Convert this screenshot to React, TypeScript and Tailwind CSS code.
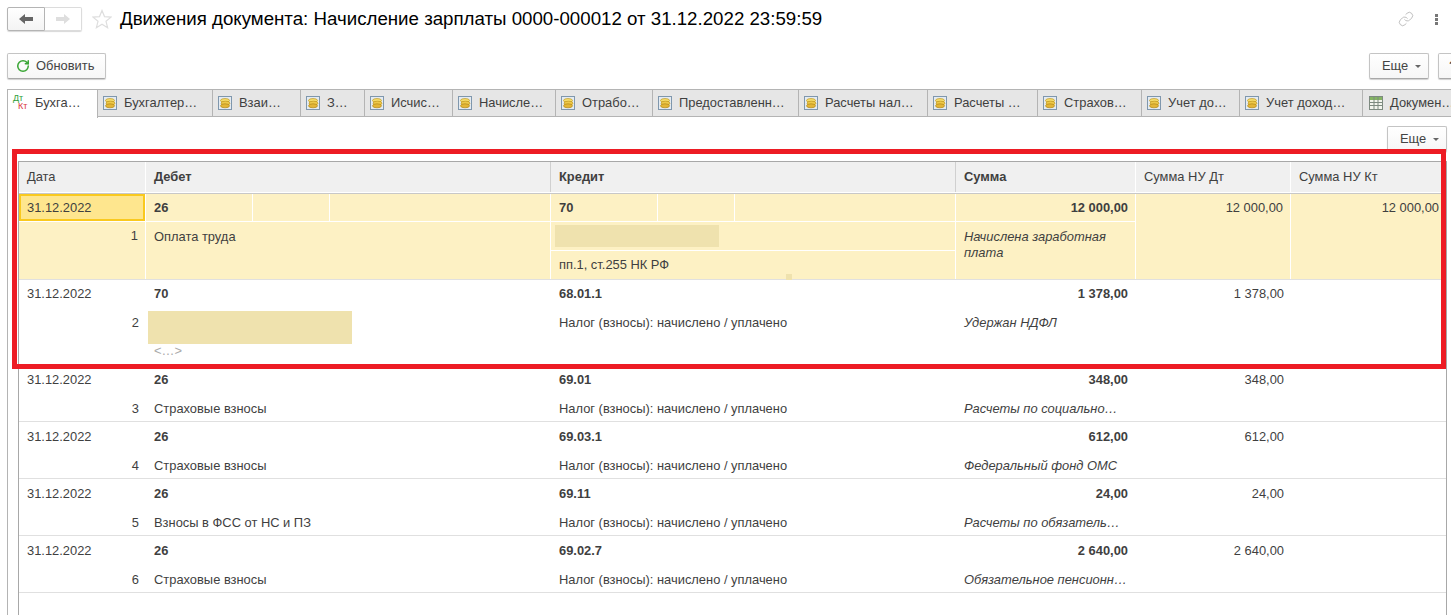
import React from "react";
import { Link, RotateCw } from "lucide-react";

const Coins = () => (
  <svg width="14" height="14" viewBox="0 0 14 14" className="shrink-0">
    <rect x="0.5" y="0.5" width="13" height="13" fill="#e4ebf2" stroke="#7f97ad" />
    <ellipse cx="7" cy="4.5" rx="4.5" ry="2" fill="#f4dc6a" stroke="#b98f14" strokeWidth="0.6" />
    <ellipse cx="7.5" cy="7.2" rx="4.5" ry="2" fill="#eec94a" stroke="#b98f14" strokeWidth="0.6" />
    <ellipse cx="7" cy="9.8" rx="4.5" ry="2" fill="#e4b636" stroke="#a87f10" strokeWidth="0.6" />
  </svg>
);

const TableIcon = () => (
  <svg width="14" height="14" viewBox="0 0 14 14" className="shrink-0">
    <rect x="0.5" y="0.5" width="13" height="13" fill="#f2f5ee" stroke="#7d8a80" />
    <rect x="1" y="1" width="12" height="3" fill="#84b562" />
    <path d="M1 6.5H13M1 9.5H13M5 1V13M9 1V13" stroke="#7d8a80" strokeWidth="1" fill="none" />
  </svg>
);

const tabs = [
  { t: "Бухгалтер…", w: "w-[115px]" },
  { t: "Взаи…", w: "w-[88px]" },
  { t: "З…", w: "w-[64px]" },
  { t: "Исчис…", w: "w-[88px]" },
  { t: "Начисле…", w: "w-[103px]" },
  { t: "Отрабо…", w: "w-[97px]" },
  { t: "Предоставленн…", w: "w-[146px]" },
  { t: "Расчеты нал…", w: "w-[129px]" },
  { t: "Расчеты …", w: "w-[110px]" },
  { t: "Страхов…", w: "w-[104px]" },
  { t: "Учет до…", w: "w-[98px]" },
  { t: "Учет доход…", w: "w-[123px]" },
];

const btn =
  "flex shrink-0 items-center rounded-[2px] border border-[#c4c4c4] border-b-[#a8a8a8] bg-gradient-to-b from-white to-[#f6f6f6] shadow-[0_1px_1px_#d0d0d0] text-[12.9px] text-[#444]";

const Caret = () => <span className="ml-[7px] h-0 w-0 border-x-[3.5px] border-t-[3px] border-x-transparent border-t-[#666]" />;

const Line = ({ className = "", children }: { className?: string; children?: React.ReactNode }) => (
  <div className={`flex items-center whitespace-nowrap ${className}`}>{children}</div>
);

type R = { d: string; n: number; dt: string; dn: string; kt: string; kn: string; s: string; sn: string; nu: string };

const rows: R[] = [
  { d: "31.12.2022", n: 3, dt: "26", dn: "Страховые взносы", kt: "69.01", kn: "Налог (взносы): начислено / уплачено", s: "348,00", sn: "Расчеты по социально…", nu: "348,00" },
  { d: "31.12.2022", n: 4, dt: "26", dn: "Страховые взносы", kt: "69.03.1", kn: "Налог (взносы): начислено / уплачено", s: "612,00", sn: "Федеральный фонд ОМС", nu: "612,00" },
  { d: "31.12.2022", n: 5, dt: "26", dn: "Взносы в ФСС от НС и ПЗ", kt: "69.11", kn: "Налог (взносы): начислено / уплачено", s: "24,00", sn: "Расчеты по обязатель…", nu: "24,00" },
  { d: "31.12.2022", n: 6, dt: "26", dn: "Страховые взносы", kt: "69.02.7", kn: "Налог (взносы): начислено / уплачено", s: "2 640,00", sn: "Обязательное пенсионн…", nu: "2 640,00" },
];

const cols = "grid grid-cols-[127px_405px_405px_180px_155px_155px]";
const head = [
  { h: "Дата", c: "border-white" },
  { h: "Дебет", c: "font-bold border-[#d0d0d0]" },
  { h: "Кредит", c: "font-bold border-[#d0d0d0]" },
  { h: "Сумма", c: "font-bold border-white" },
  { h: "Сумма НУ Дт", c: "border-white" },
  { h: "Сумма НУ Кт", c: "border-white" },
];

export default function App() {
  return (
    <div className="relative h-[615px] w-[1451px] overflow-hidden bg-white pl-[7px] pt-[7px] text-[12.9px] text-[#3f3f3f] [font-family:'Liberation_Sans',Arial,sans-serif]">
      {/* title bar */}
      <div className="flex h-[24px] items-center">
        <div className="flex h-[24px] w-[75px] shrink-0 rounded-[2px] shadow-[0_1px_1px_#d8d8d8]">
          <div className="flex w-[38px] items-center justify-center rounded-l-[2px] border border-[#b4b4b4] bg-gradient-to-b from-white to-[#f4f4f4]">
            <svg width="14" height="10" viewBox="0 0 14 10"><path d="M0 5L6 0V3H14V7H6V10Z" fill="#666" /></svg>
          </div>
          <div className="flex flex-1 items-center justify-center rounded-r-[2px] border border-l-0 border-[#dcdcdc] bg-white">
            <svg width="14" height="10" viewBox="0 0 14 10"><path d="M14 5L8 0V3H0V7H8V10Z" fill="#dedede" /></svg>
          </div>
        </div>
        <svg width="20" height="20" viewBox="0 0 20 20" className="ml-[10px] shrink-0">
          <path d="M10 1.5L12.5 7.6L19 8.1L14 12.3L15.6 18.7L10 15.2L4.4 18.7L6 12.3L1 8.1L7.5 7.6Z" fill="none" stroke="#dedede" strokeWidth="1.2" />
        </svg>
        <h1 className="ml-[8px] text-[18.7px] font-normal whitespace-nowrap text-black">Движения документа: Начисление зарплаты 0000-000012 от 31.12.2022 23:59:59</h1>
        <Link size={16} strokeWidth={1.2} className="absolute left-[1398px] top-[11px] text-[#b0b0b0]" />
        <div className="absolute left-[1435px] top-[14px] flex flex-col gap-[1px]">
          <span className="h-[3px] w-[3px] bg-[#777]" />
          <span className="h-[3px] w-[3px] bg-[#777]" />
          <span className="h-[3px] w-[3px] bg-[#777]" />
        </div>
      </div>

      {/* toolbar */}
      <div className="mt-[22px] flex h-[26px] items-stretch">
        <button className={`${btn} w-[99px] pl-[8px]`}>
          <RotateCw size={14} strokeWidth={2.6} className="text-[#3aa635]" />
          <span className="ml-[6px]">Обновить</span>
        </button>
        <button className={`${btn} ml-[1263px] w-[60px] pl-[12px]`}>
          Еще
          <Caret />
        </button>
        <button className={`${btn} ml-[9px] w-[40px] pl-[10px] font-bold`}>?</button>
      </div>

      {/* tabs */}
      <div className="mt-[10px] flex h-[28px] items-start">
        <div className="relative z-10 flex h-[29px] w-[91px] shrink-0 items-center gap-[6px] border border-b-0 border-[#b4b4b4] bg-white pl-[5px] pb-[2px]">
          <span className="relative h-[16px] w-[16px] shrink-0 text-[9px] leading-[9px]">
            <span className="absolute left-0 -top-[1px] text-[#2e9e3a]">Дт</span>
            <span className="absolute left-[5px] top-[7px] text-[#d9363a]">Кт</span>
          </span>
          <span className="whitespace-nowrap">Бухга…</span>
        </div>
        {tabs.map((t) => (
          <div key={t.t + t.w} className={`${t.w} flex h-[28px] shrink-0 items-center gap-[7px] border-y border-r border-[#b4b4b4] bg-[#e6e6e6] pl-[5px] whitespace-nowrap`}>
            <Coins />
            <span>{t.t}</span>
          </div>
        ))}
        <div className="flex h-[28px] w-[100px] shrink-0 items-center gap-[7px] border-y border-[#b4b4b4] bg-[#e6e6e6] pl-[6px] whitespace-nowrap">
          <TableIcon />
          <span>Докумен…</span>
        </div>
      </div>

      {/* content */}
      <div className="h-[500px] w-[1460px] border-l border-[#b4b4b4] pl-[10px] pt-[9px]">
        <div className="flex h-[26px] w-[1429px] justify-end">
          <button className={`${btn} w-[60px] pl-[12px]`}>
            Еще
            <Caret />
          </button>
        </div>

        <div className="mt-[9px] h-[500px] w-[1429px] border-x border-t border-[#a8a8a8]">
          {/* header */}
          <div className={`${cols} h-[32px] border-b border-[#c8c8c8]`}>
            {head.map((h) => (
              <div key={h.h} className={`flex h-[30px] items-center border-r bg-[#f0f0f0] pl-[8px] ${h.c}`}>
                {h.h}
              </div>
            ))}
          </div>

          {/* row 1: selected */}
          <div className={`${cols} relative h-[86px] border-b border-[#e0e0e0] bg-[#fdf1c4] pb-px`}>
            <div className="border-r border-white">
              <div className="h-[27px] border-2 border-[#f9c91f] bg-[#fee68e] pl-[6px] leading-[23px]">31.12.2022</div>
              <Line className="h-[29px] justify-end border-t border-white pr-[7px]">1</Line>
            </div>
            <div className="border-r border-white">
              <div className="flex h-[28px] border-b border-white font-bold">
                <Line className="w-[107px] border-r border-white pl-[8px]">26</Line>
                <div className="w-[77px] border-r border-white" />
              </div>
              <Line className="h-[29px] pl-[8px]">Оплата труда</Line>
            </div>
            <div className="border-r border-white">
              <div className="flex h-[28px] border-b border-white font-bold">
                <Line className="w-[107px] border-r border-white pl-[8px]">70</Line>
                <div className="w-[77px] border-r border-white" />
              </div>
              <div className="flex h-[29px] items-center border-b border-white pl-[4px]">
                <div className="h-[22px] w-[164px] bg-[#efe2ae]" />
              </div>
              <Line className="h-[28px] pl-[8px]">пп.1, ст.255 НК РФ</Line>
            </div>
            <div className="border-r border-white">
              <Line className="h-[28px] justify-end border-b border-white pr-[7px] font-bold">12 000,00</Line>
              <div className="pl-[8px] pr-[20px] pt-[7px] leading-[16px] italic">Начислена заработная плата</div>
            </div>
            <div className="border-r border-white">
              <Line className="h-[27px] justify-end pr-[7px]">12 000,00</Line>
            </div>
            <Line className="h-[27px] justify-end pr-[7px]">12 000,00</Line>
            <div className="absolute left-[767px] top-[80px] h-[6px] w-[6px] bg-[#efe2ae]" />
          </div>

          {/* row 2 */}
          <div className={`${cols} h-[85px] border-b border-[#e0e0e0]`}>
            <div>
              <Line className="h-[28px] pl-[8px]">31.12.2022</Line>
              <Line className="h-[29px] justify-end pr-[7px]">2</Line>
            </div>
            <div>
              <Line className="h-[28px] pl-[8px] font-bold">70</Line>
              <div className="mt-[3px] ml-[2px] h-[33px] w-[204px] bg-[#efe2ae]" />
              <Line className="h-[14px] pl-[8px] text-[#aaa]">&lt;…&gt;</Line>
            </div>
            <div>
              <Line className="h-[28px] pl-[8px] font-bold">68.01.1</Line>
              <Line className="h-[29px] pl-[8px]">Налог (взносы): начислено / уплачено</Line>
            </div>
            <div>
              <Line className="h-[28px] justify-end pr-[8px] font-bold">1 378,00</Line>
              <Line className="h-[29px] pl-[8px] italic">Удержан НДФЛ</Line>
            </div>
            <Line className="h-[28px] justify-end pr-[7px]">1 378,00</Line>
            <div />
          </div>

          {/* remaining rows */}
          {rows.map((r) => (
            <div key={r.n} className={`${cols} h-[57px] border-b border-[#e0e0e0]`}>
              <div>
                <Line className="h-[30px] pl-[8px]">{r.d}</Line>
                <Line className="h-[26px] items-start justify-end pr-[7px]">
                  <span className="mt-[4px]">{r.n}</span>
                </Line>
              </div>
              <div>
                <Line className="h-[30px] pl-[8px] font-bold">{r.dt}</Line>
                <Line className="h-[26px] items-start pl-[8px]">
                  <span className="mt-[4px]">{r.dn}</span>
                </Line>
              </div>
              <div>
                <Line className="h-[30px] pl-[8px] font-bold">{r.kt}</Line>
                <Line className="h-[26px] items-start pl-[8px]">
                  <span className="mt-[4px]">{r.kn}</span>
                </Line>
              </div>
              <div>
                <Line className="h-[30px] justify-end pr-[8px] font-bold">{r.s}</Line>
                <Line className="h-[26px] items-start pl-[8px] italic">
                  <span className="mt-[4px]">{r.sn}</span>
                </Line>
              </div>
              <Line className="h-[30px] justify-end pr-[7px]">{r.nu}</Line>
              <div />
            </div>
          ))}
        </div>
      </div>

      {/* annotation frame */}
      <div className="pointer-events-none absolute left-[12px] top-[149px] h-[220px] w-[1434px] border-[5px] border-[#ed1c24]" />
    </div>
  );
}
